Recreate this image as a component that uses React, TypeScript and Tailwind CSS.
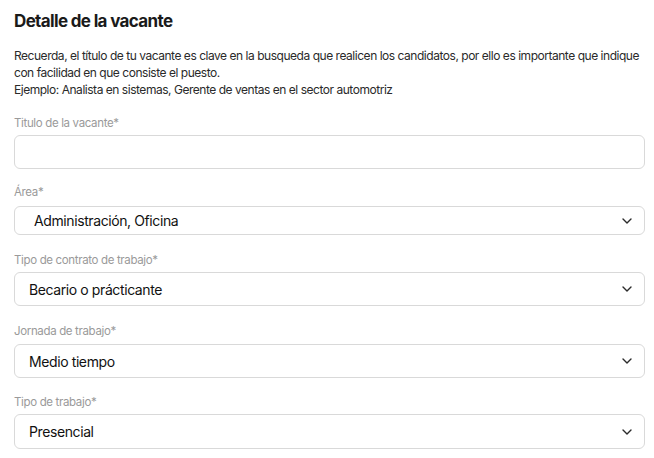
import React from "react";

const Chevron = () => (
  <svg width="10" height="6" viewBox="0 0 10 6" fill="none" stroke="#2b2b2b" strokeWidth="1.4" strokeLinecap="round" strokeLinejoin="round">
    <path d="M1 1l4 4 4-4" />
  </svg>
);

function Label({ children }: { children: React.ReactNode }) {
  return <div className="text-[11.5px] leading-[16px] text-[#9a9a9a] tracking-[-0.35px]">{children}</div>;
}

function Select({ value, h = "h-[34px]", pl = "pl-[14px]" }: { value: string; h?: string; pl?: string }) {
  return (
    <div className={`flex items-center justify-between ${h} ${pl} pr-[12px] rounded-[6px] border border-[#d9d9d9] bg-white`}>
      <span className="text-[14px] font-normal text-[#111111] tracking-[-0.4px]">{value}</span>
      <Chevron />
    </div>
  );
}

export default function App() {
  return (
    <div className="w-[654px] h-[458px] bg-white pl-[14px] pr-[9px] pt-[9px] overflow-hidden" style={{ fontFamily: "Inter, 'Noto Sans', sans-serif" }}>
      <h1 className="text-[17px] leading-[24px] font-bold text-[#1a1a1a] tracking-[-0.65px]">Detalle de la vacante</h1>
      <p className="mt-[14px] text-[12px] leading-[17px] text-[#2a2a2a] tracking-[-0.47px]">
        Recuerda, el título de tu vacante es clave en la busqueda que realicen los candidatos, por ello es importante que indique con facilidad en que consiste el puesto.
        <br />
        Ejemplo: Analista en sistemas, Gerente de ventas en el sector automotriz
      </p>
      <div className="mt-[17px] flex flex-col">
        <Label>Titulo de la vacante*</Label>
        <div className="mt-[4px] h-[34px] rounded-[6px] border border-[#d9d9d9] bg-white" />
        <div className="mt-[15px]"><Label>Área*</Label></div>
        <div className="mt-[6px]"><Select value="Administración, Oficina" h="h-[29px]" pl="pl-[19px]" /></div>
        <div className="mt-[17px]"><Label>Tipo de contrato de trabajo*</Label></div>
        <div className="mt-[4px]"><Select value="Becario o prácticante" /></div>
        <div className="mt-[17px]"><Label>Jornada de trabajo*</Label></div>
        <div className="mt-[5px]"><Select value="Medio tiempo" /></div>
        <div className="mt-[16px]"><Label>Tipo de trabajo*</Label></div>
        <div className="mt-[4px]"><Select value="Presencial" h="h-[35px]" /></div>
      </div>
    </div>
  );
}
